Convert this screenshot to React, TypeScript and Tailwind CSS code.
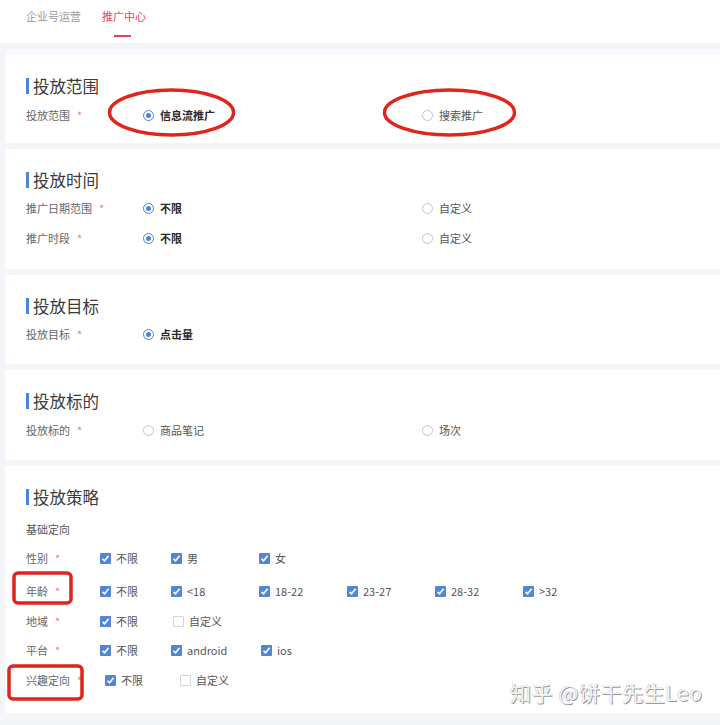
import React from "react";

const FONT = { fontFamily: '"Noto Sans CJK SC", "Noto Sans", sans-serif' };

function Radio({ checked, label, width }: { checked: boolean; label: string; width?: string }) {
  return (
    <div className={`flex items-center gap-[6px] ${width ?? ""}`}>
      {checked ? (
        <span className="flex h-[11px] w-[11px] items-center justify-center rounded-full border border-[#4a84d6] bg-white">
          <span className="h-[5px] w-[5px] rounded-full bg-[#4a84d6]" />
        </span>
      ) : (
        <span className="h-[11px] w-[11px] rounded-full border border-[#c4c4c4] bg-white" />
      )}
      <span className={checked ? "text-[11px] font-bold text-[#2a2a2a]" : "text-[11px] text-[#555]"}>{label}</span>
    </div>
  );
}

function Check({ checked, label, width }: { checked: boolean; label: string; width: string }) {
  return (
    <div className={`flex items-center gap-[5px] ${width}`}>
      {checked ? (
        <span className="flex h-[11px] w-[11px] items-center justify-center rounded-[1px] bg-[#4f86d8]">
          <svg width="9" height="9" viewBox="0 0 9 9">
            <path d="M1.5 4.8 L3.6 6.8 L7.6 1.8" fill="none" stroke="#fff" strokeWidth="1.6" />
          </svg>
        </span>
      ) : (
        <span className="h-[11px] w-[11px] rounded-[1px] border border-[#d6d6d6] bg-white" />
      )}
      <span className="text-[11px] text-[#555]">{label}</span>
    </div>
  );
}

function Label({ text, width }: { text: string; width: string }) {
  return (
    <div className={`flex items-center ${width} text-[11px] text-[#666]`}>
      <span>{text}</span>
      <span className="ml-[7px] text-[#f07a7a]">*</span>
    </div>
  );
}

function Title({ text }: { text: string }) {
  return (
    <div className="flex h-[20px] items-center">
      <span className="h-[16px] w-[3px] bg-[#4a84d6]" />
      <span className="ml-[4px] text-[16.5px] leading-[20px] text-[#3a3a3a]">{text}</span>
    </div>
  );
}

function Card({ children, className }: { children: React.ReactNode; className?: string }) {
  return <div className={`ml-[5px] bg-white pl-[21px] pt-[21px] ${className ?? ""}`}>{children}</div>;
}

function RadioRow({ label, a, b }: { label: string; a: [string, boolean]; b?: [string, boolean] }) {
  return (
    <div className="flex h-[30px] items-center">
      <Label text={label} width="w-[117px]" />
      <Radio checked={a[1]} label={a[0]} width="w-[279px]" />
      {b && <Radio checked={b[1]} label={b[0]} />}
    </div>
  );
}

export default function App() {
  return (
    <div className="relative h-[725px] w-[720px] overflow-hidden bg-[#f3f5f9]" style={FONT}>
      {/* top nav */}
      <div className="relative h-[43px] bg-white">
        <div className="flex items-center pl-[26px] pt-[8px] text-[11px]">
          <span className="text-[#9a9a9a]">企业号运营</span>
          <span className="ml-[21px] text-[#e2445c]">推广中心</span>
        </div>
        <div className="absolute left-[114px] top-[35px] h-[2px] w-[17px] bg-[#e2445c]" />
      </div>
      <div className="h-[6px]" />
      <div className="ml-[5px] h-[6px] bg-[#f8f9fc]" />

      <div className="flex flex-col gap-[6px]">
        <Card className="h-[88px]">
          <Title text="投放范围" />
          <div className="mt-[4px]">
            <RadioRow label="投放范围" a={["信息流推广", true]} b={["搜索推广", false]} />
          </div>
        </Card>

        <Card className="h-[120px]">
          <Title text="投放时间" />
          <div className="mt-[3px]">
            <RadioRow label="推广日期范围" a={["不限", true]} b={["自定义", false]} />
            <RadioRow label="推广时段" a={["不限", true]} b={["自定义", false]} />
          </div>
        </Card>

        <Card className="h-[89px]">
          <Title text="投放目标" />
          <div className="mt-[3px]">
            <RadioRow label="投放目标" a={["点击量", true]} />
          </div>
        </Card>

        <Card className="h-[90px]">
          <Title text="投放标的" />
          <div className="mt-[4px]">
            <RadioRow label="投放标的" a={["商品笔记", false]} b={["场次", false]} />
          </div>
        </Card>

        <Card className="h-[247px]">
          <Title text="投放策略" />
          <div className="mt-[7px] flex h-[30px] items-center text-[11px] text-[#555]">基础定向</div>
          <div className="flex h-[29px] items-center">
            <Label text="性别" width="w-[74px]" />
            <Check checked label="不限" width="w-[71px]" />
            <Check checked label="男" width="w-[88px]" />
            <Check checked label="女" width="w-[88px]" />
          </div>
          <div className="mt-[3px] flex h-[30px] items-center">
            <Label text="年龄" width="w-[74px]" />
            <Check checked label="不限" width="w-[71px]" />
            <Check checked label="<18" width="w-[88px]" />
            <Check checked label="18-22" width="w-[88px]" />
            <Check checked label="23-27" width="w-[88px]" />
            <Check checked label="28-32" width="w-[88px]" />
            <Check checked label=">32" width="w-[88px]" />
          </div>
          <div className="flex h-[30px] items-center">
            <Label text="地域" width="w-[74px]" />
            <Check checked label="不限" width="w-[73px]" />
            <Check checked={false} label="自定义" width="w-[88px]" />
          </div>
          <div className="flex h-[29px] items-center">
            <Label text="平台" width="w-[74px]" />
            <Check checked label="不限" width="w-[71px]" />
            <Check checked label="android" width="w-[90px]" />
            <Check checked label="ios" width="w-[88px]" />
          </div>
          <div className="flex h-[30px] items-center">
            <Label text="兴趣定向" width="w-[79px]" />
            <Check checked label="不限" width="w-[75px]" />
            <Check checked={false} label="自定义" width="w-[88px]" />
          </div>
        </Card>
      </div>

      {/* annotations */}
      <svg className="pointer-events-none absolute left-0 top-0" width="720" height="725">
        <ellipse cx="171.5" cy="112.5" rx="62" ry="22.5" fill="none" stroke="#e0251c" strokeWidth="3.5" />
        <ellipse cx="449.5" cy="112.5" rx="65" ry="22.5" fill="none" stroke="#e0251c" strokeWidth="3.5" />
        <rect x="14" y="573" width="57" height="30" rx="4" fill="none" stroke="#e0251c" strokeWidth="3.5" />
        <rect x="9" y="666" width="73" height="33" rx="4" fill="none" stroke="#e0251c" strokeWidth="3.5" />
      </svg>

      {/* watermark */}
      <div className="absolute left-[510px] top-[678px] text-[21px] leading-[28px] tracking-[0.6px] text-[#f6f6f6] [text-shadow:1px_1px_0_#999,-0.5px_-0.5px_0_#c8c8c8]">
        知乎 @饼干先生Leo
      </div>
    </div>
  );
}
